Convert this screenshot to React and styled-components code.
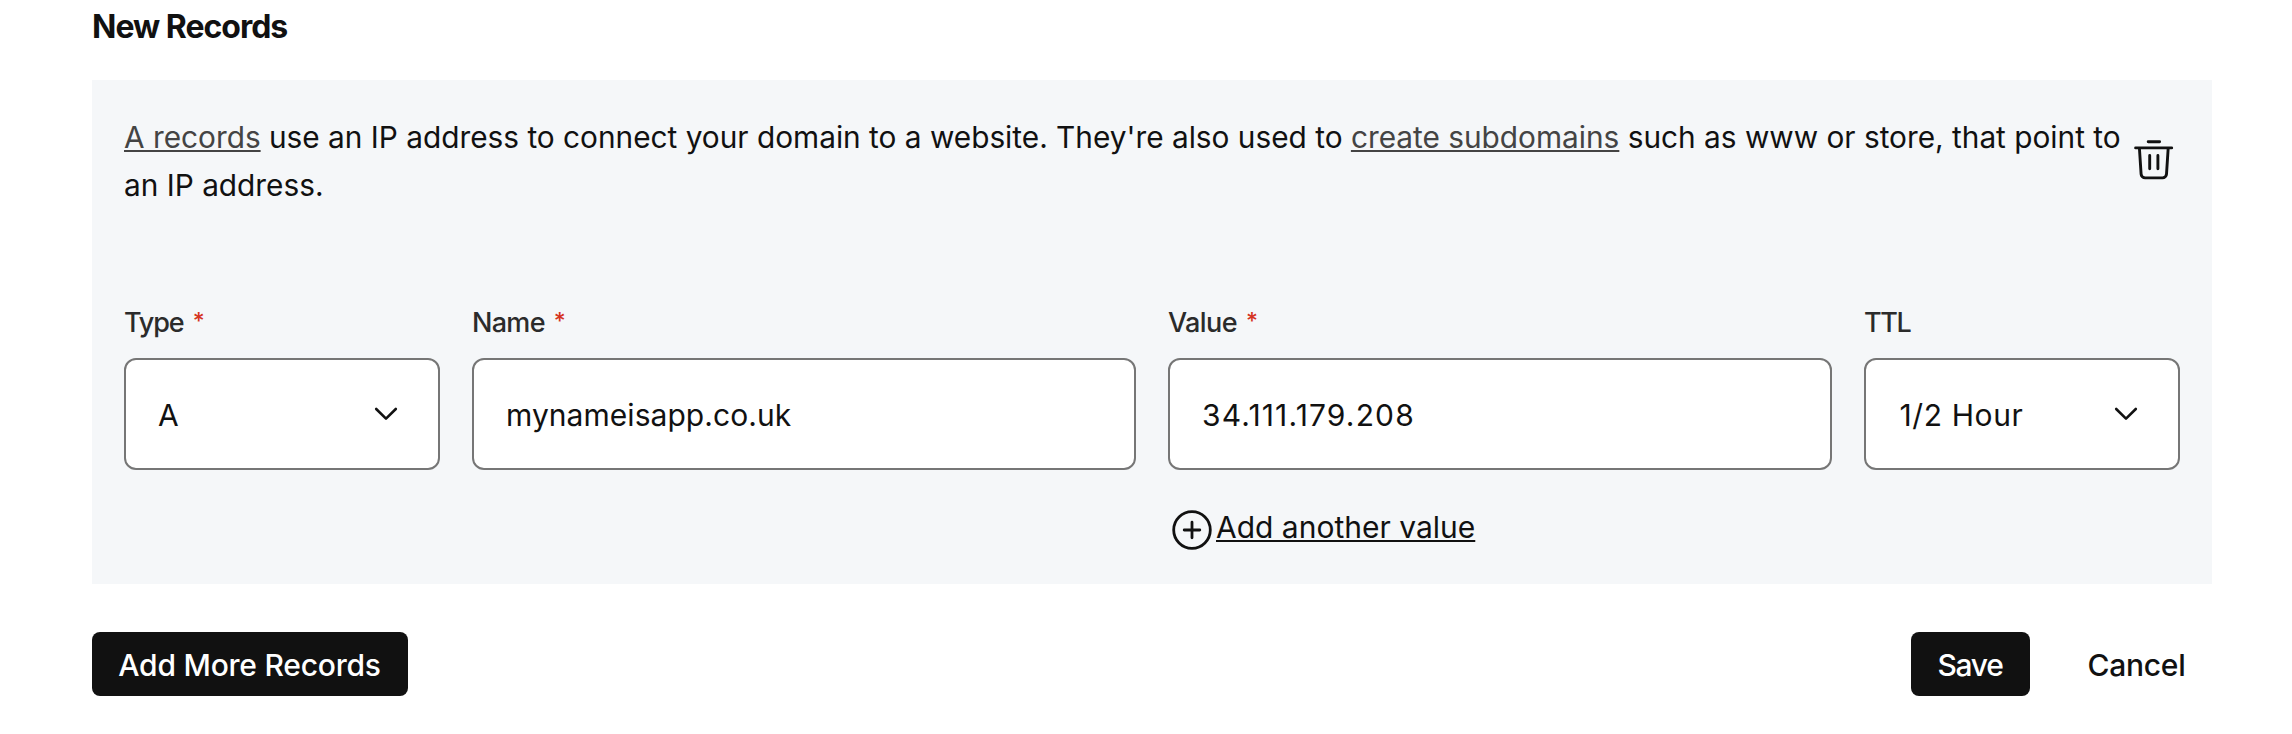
import React from 'react';
import styled, { createGlobalStyle } from 'styled-components';

const GlobalStyle = createGlobalStyle`
  * { box-sizing: border-box; }
  body {
    margin: 0;
    background: #fff;
    color: #111;
    font-family: Inter, "Liberation Sans", sans-serif;
    font-size: 30px;
    line-height: 48px;
  }
`;

const Page = styled.main`
  padding: 7px 80px 0 92px;
`;

const Heading = styled.h1`
  margin: 0 0 33px;
  font-size: 32px;
  line-height: 40px;
  font-weight: 700;
  letter-spacing: -1px;
`;

const Panel = styled.section`
  height: 504px;
  padding: 33px 32px 30px;
  background: #f5f7f9;
`;

const Intro = styled.div`
  display: flex;
  align-items: center;
  margin-bottom: 94px;
`;

const Description = styled.p`
  flex: none;
  width: 2006px;
  margin: 0;
  font-size: 29.8px;
`;

const Link = styled.a`
  color: ${(p) => (p.$muted ? '#444' : '#111')};
  text-decoration: underline;
  text-decoration-thickness: 2px;
  text-underline-offset: 2px;
  text-decoration-skip-ink: none;
`;

const IconButton = styled.button`
  display: flex;
  padding: 0;
  border: 0;
  background: none;
  color: inherit;
`;

const Fields = styled.div`
  display: grid;
  grid-template-columns: 316px 664px 664px 316px;
  column-gap: 32px;
`;

const Field = styled.div`
  display: flex;
  flex-direction: column;
`;

const Label = styled.label`
  display: flex;
  height: 40px;
  margin-bottom: 15px;
  color: #2b2b2b;
  font-size: 27px;
  line-height: 40px;
  font-weight: 500;
  letter-spacing: ${(p) => p.$tracking}px;
`;

const Required = styled.span`
  margin-left: 9px;
  color: #d5341f;
  font-size: 23px;
  line-height: 36px;
`;

const Control = styled.div`
  display: flex;
  align-items: center;
  justify-content: space-between;
  height: 112px;
  padding: 0 36px 0 32px;
  border: 2px solid #767676;
  border-radius: 12px;
  background: #fff;
`;

const ControlText = styled.span`
  padding: 2px 0 0 ${(p) => p.$indent || 0}px;
  letter-spacing: ${(p) => p.$tracking || 0}px;
`;

const AddValue = styled.div`
  display: flex;
  align-items: center;
  height: 48px;
  margin-top: 36px;
`;

const AddValueText = styled.span`
  padding-bottom: 6px;
`;

const Footer = styled.footer`
  display: flex;
  align-items: center;
  margin-top: 48px;
`;

const Actions = styled.div`
  display: flex;
  gap: 32px;
  margin-left: auto;
`;

const Button = styled.button`
  width: ${(p) => p.$width}px;
  height: 64px;
  padding: 2px 1px 0 0;
  border: 0;
  border-radius: 8px;
  background: ${(p) => (p.$plain ? 'transparent' : '#111')};
  color: ${(p) => (p.$plain ? '#111' : '#fff')};
  font: 500 30px/48px Inter, "Liberation Sans", sans-serif;
  letter-spacing: ${(p) => p.$tracking}px;
`;

const Chevron = () => (
  <svg width="32" height="32" viewBox="0 0 32 32" fill="none" stroke="#111" strokeWidth="2.6" strokeLinecap="round" strokeLinejoin="round">
    <path d="M6.2 11 16 20.6 25.8 11" />
  </svg>
);

const Trash = () => (
  <svg width="48" height="48" viewBox="0 0 48 48" fill="none" stroke="#111" strokeWidth="2.9" strokeLinecap="round" strokeLinejoin="round">
    <path d="M18.2 4.7h11.4M5.6 10.9h36.1M9.4 11l1.7 26.1a4 4 0 0 0 4 3.8h17.4a4 4 0 0 0 4-3.8L38.2 11M19.7 18.4v13.4M27.9 18.4v13.4" />
  </svg>
);

const PlusCircle = () => (
  <svg width="48" height="48" viewBox="0 0 48 48" fill="none" stroke="#111" strokeWidth="2.8" strokeLinecap="round">
    <circle cx="24" cy="24" r="18.3" />
    <path d="M24 16.2v15.6M16.2 24h15.6" />
  </svg>
);

function FormField({ label, labelTracking, required, value, tracking, indent, select, children }) {
  return (
    <Field>
      <Label $tracking={labelTracking}>
        {label}
        {required && <Required>*</Required>}
      </Label>
      <Control>
        <ControlText $tracking={tracking} $indent={indent}>{value}</ControlText>
        {select && <Chevron />}
      </Control>
      {children}
    </Field>
  );
}

export default function App() {
  return (
    <>
      <GlobalStyle />
      <Page>
        <Heading>New Records</Heading>
        <Panel>
          <Intro>
            <Description>
              <Link $muted>A records</Link> use an IP address to connect your domain to a website.
              They're also used to <Link $muted>create subdomains</Link> such as www or store, that point to
              an IP address.
            </Description>
            <IconButton aria-label="Delete record"><Trash /></IconButton>
          </Intro>
          <Fields>
            <FormField label="Type" labelTracking={-1.1} required value="A" select />
            <FormField label="Name" labelTracking={-0.7} required value="mynameisapp.co.uk" tracking={0.05} />
            <FormField label="Value" labelTracking={-0.6} required value="34.111.179.208" tracking={1.15}>
              <AddValue>
                <PlusCircle />
                <AddValueText><Link>Add another value</Link></AddValueText>
              </AddValue>
            </FormField>
            <FormField label="TTL" labelTracking={-1.4} value="1/2 Hour" tracking={0.6} indent={1.5} select />
          </Fields>
        </Panel>
        <Footer>
          <Button $width={316} $tracking={-0.23}>Add More Records</Button>
          <Actions>
            <Button $width={119} $tracking={-1.3}>Save</Button>
            <Button $width={150} $tracking={-0.25} $plain>Cancel</Button>
          </Actions>
        </Footer>
      </Page>
    </>
  );
}
